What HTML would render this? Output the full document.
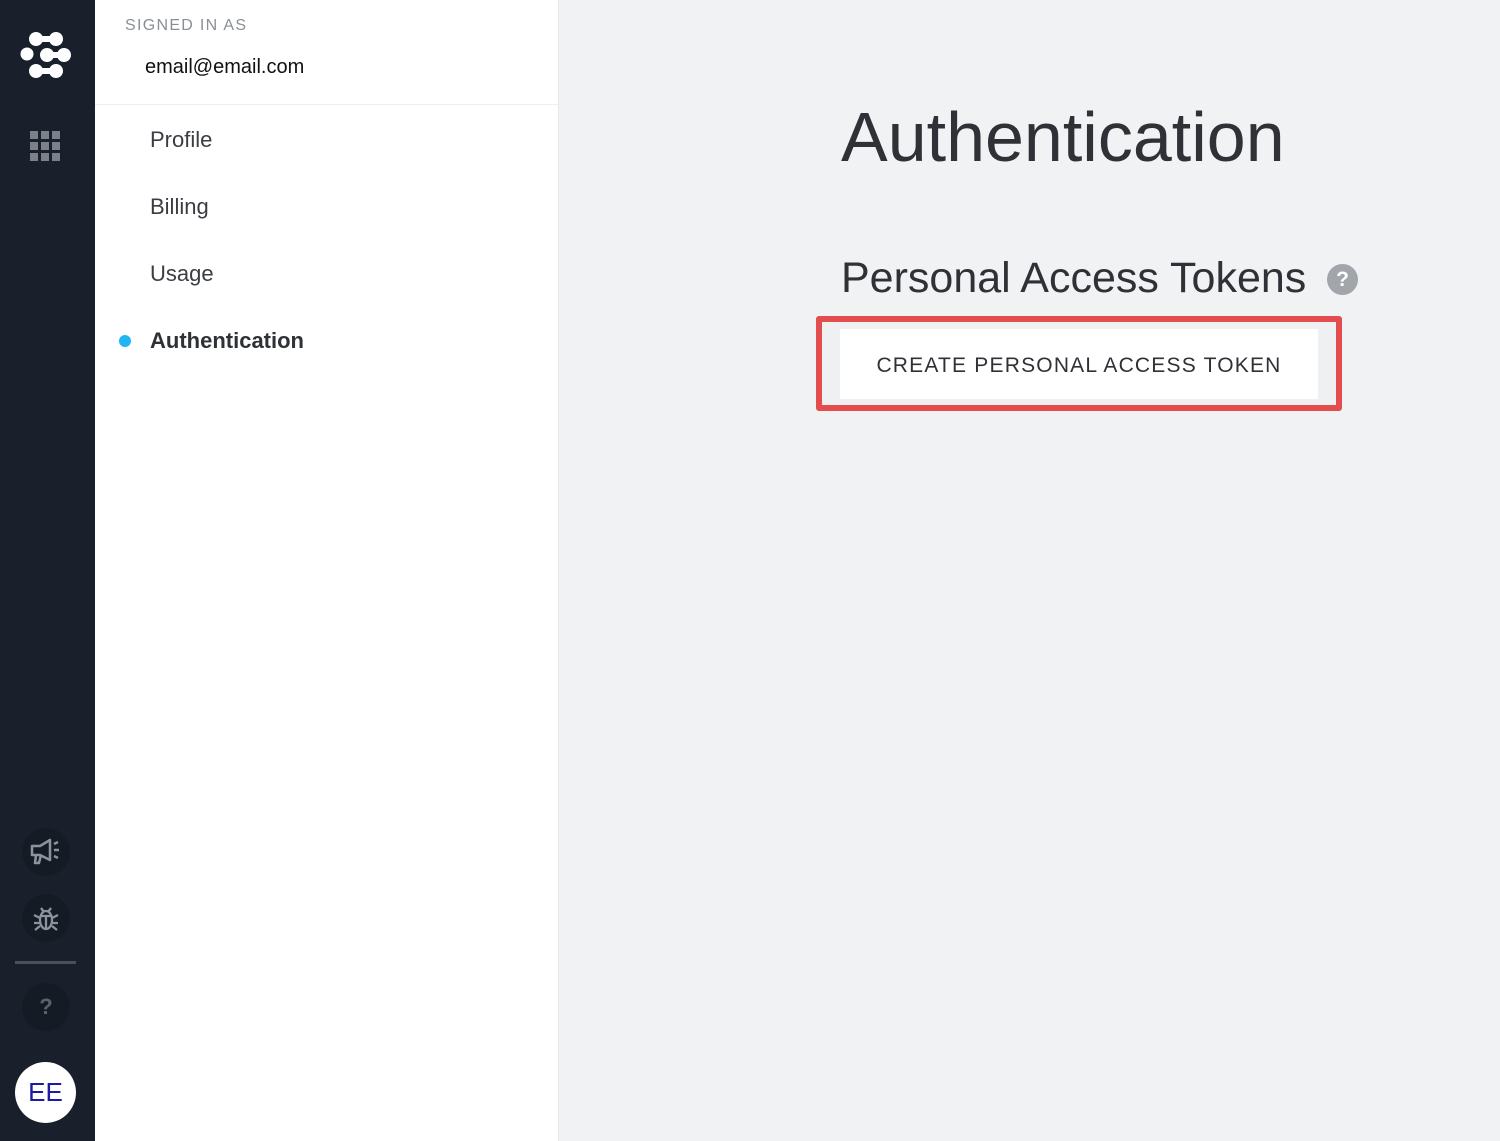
<!DOCTYPE html>
<html><head><style>
*{margin:0;padding:0;box-sizing:border-box}
body{width:1500px;height:1141px;overflow:hidden;background:#f1f2f4;font-family:"Liberation Sans",sans-serif;position:relative}
.side{position:absolute;left:0;top:0;width:95px;height:1141px;background:#19202b}
.panel{position:absolute;left:95px;top:0;width:464px;height:1141px;background:#fff;border-right:1px solid #e6e8eb}
.abs{position:absolute}
.circ{position:absolute;left:22px;width:48px;height:48px;border-radius:50%;background:#151b24}
</style></head><body>
<div class="side">
<svg class="abs" style="left:20px;top:32px" width="52" height="48" viewBox="0 0 52 48">
<g fill="#fff">
<circle cx="16" cy="7" r="7"/><circle cx="36" cy="7" r="7"/><rect x="16" y="4" width="20" height="6"/>
<circle cx="7" cy="22" r="6.5"/>
<circle cx="27" cy="23" r="7"/><circle cx="44" cy="23" r="7"/><rect x="27" y="20" width="17" height="6"/>
<circle cx="16" cy="39" r="7"/><circle cx="36" cy="39" r="7"/><rect x="16" y="36" width="20" height="6"/>
</g></svg>
<svg class="abs" style="left:30px;top:131px" width="30" height="30" viewBox="0 0 30 30"><g fill="#7b808a">
<rect x="0" y="0" width="8" height="8"/><rect x="11" y="0" width="8" height="8"/><rect x="22" y="0" width="8" height="8"/>
<rect x="0" y="11" width="8" height="8"/><rect x="11" y="11" width="8" height="8"/><rect x="22" y="11" width="8" height="8"/>
<rect x="0" y="22" width="8" height="8"/><rect x="11" y="22" width="8" height="8"/><rect x="22" y="22" width="8" height="8"/></g></svg>
<div class="circ" style="top:828px"></div>
<svg class="abs" style="left:30px;top:838px" width="32" height="28" viewBox="0 0 32 28" fill="none" stroke="#8d929b" stroke-width="2.5" stroke-linejoin="round"><path d="M2 8h8l10-6v20l-10-5H2z M6 17l-1 8h4l2-8"/><path d="M24 6l4-2M24 12h5M24 18l4 2"/></svg>
<div class="circ" style="top:894px"></div>
<svg class="abs" style="left:32px;top:903px" width="28" height="30" viewBox="0 0 28 30" fill="none" stroke="#8d929b" stroke-width="2.3"><ellipse cx="14" cy="17" rx="6" ry="9"/><path d="M9 5l3 4M19 5l-3 4M8 13h12M14 13v13M2 12l6 3M26 12l-6 3M2 20h6M26 20h-6M3 27l5-4M25 27l-5-4"/></svg>
<div class="abs" style="left:15px;top:961px;width:61px;height:3px;background:#4a5059"></div>
<div class="circ" style="top:983px;color:#5c626c;font-weight:bold;font-size:22px;text-align:center;line-height:48px">?</div>
<div class="abs" style="left:15px;top:1062px;width:61px;height:61px;border-radius:50%;background:#fff;color:#1c1aa0;font-size:26px;text-align:center;line-height:61px">EE</div>
</div>
<div class="panel">
<div class="abs" style="left:30px;top:17px;font-size:16px;letter-spacing:1.3px;color:#8a8f97">SIGNED IN AS</div>
<div class="abs" style="left:50px;top:56px;font-size:20px;color:#111">email@email.com</div>
<div class="abs" style="left:0;top:104px;width:463px;height:1px;background:#eceef0"></div>
<div class="abs" style="left:55px;top:127px;font-size:22px;color:#3a3d42">Profile</div>
<div class="abs" style="left:55px;top:194px;font-size:22px;color:#3a3d42">Billing</div>
<div class="abs" style="left:55px;top:261px;font-size:22px;color:#3a3d42">Usage</div>
<div class="abs" style="left:24px;top:335px;width:12px;height:12px;border-radius:50%;background:#1fb6f2"></div>
<div class="abs" style="left:55px;top:328px;font-size:22px;font-weight:bold;color:#2e3136">Authentication</div>
</div>
<div class="abs" style="left:841px;top:97px;font-size:70px;color:#2f3136">Authentication</div>
<div class="abs" style="left:841px;top:254px;font-size:43px;color:#2f3136">Personal Access Tokens</div>
<div class="abs" style="left:1327px;top:264px;width:31px;height:31px;border-radius:50%;background:#a2a5aa;color:#fff;font-weight:bold;font-size:21px;text-align:center;line-height:31px">?</div>
<div class="abs" style="left:816px;top:316px;width:526px;height:95px;border:6px solid #e34d4d;border-radius:3px;background:#eef0f2"></div>
<div class="abs" style="left:840px;top:329px;width:478px;height:70px;background:#fff;font-size:21px;letter-spacing:1.2px;color:#2f3136;text-align:center;line-height:74px">CREATE PERSONAL ACCESS TOKEN</div>
</body></html>
